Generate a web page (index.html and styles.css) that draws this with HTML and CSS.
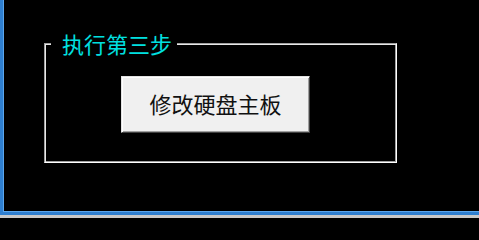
FILE: index.html
```html
<!DOCTYPE html>
<html lang="zh">
<head>
<meta charset="utf-8">
<link rel="stylesheet" href="styles.css">
</head>
<body>
<div class="window">
  <div class="panel">
    <fieldset class="group">
      <legend class="group-title">执行第三步</legend>
      <button class="btn" type="button">修改硬盘主板</button>
    </fieldset>
  </div>
  <div class="status"></div>
</div>
</body>
</html>
```

FILE: styles.css
```css
html, body {
  margin: 0;
  padding: 0;
  background: #000;
  overflow: hidden;
}
.window {
  width: 479px;
  height: 218px;
  display: flex;
  flex-direction: column;
  overflow: hidden;
}
.panel {
  flex: 0 0 auto;
  box-sizing: border-box;
  height: 215px;
  background: #000;
  border-left: 3px solid #2f7fd0;
  border-bottom: 3px solid #2f7fd0;
  box-shadow: inset 1px -1px 0 #5aa6ee;
  padding: 32px 0 0 41px;
}
.status {
  flex: 1 1 auto;
  background: #c9c9c9;
}
.group {
  box-sizing: border-box;
  width: 353px;
  margin: 0;
  padding: 0 0 29px 0;
  min-width: 0;
  border-width: 1px;
  border-style: solid;
  border-color: #a0a0a0 #ffffff #ffffff #a0a0a0;
  box-shadow: inset 1px 1px 0 #e8e8e8, inset -1px -1px 0 #a0a0a0;
}
.group-title {
  margin-left: 6px;
  padding: 0 5px 0 11px;
  background: #000;
  color: #00e0e0;
  font-family: "Noto Sans CJK SC", "Noto Sans", sans-serif;
  font-size: 22px;
  line-height: 22px;
  height: 22px;
}
.btn {
  display: flex;
  align-items: center;
  justify-content: center;
  box-sizing: border-box;
  width: 189px;
  height: 57px;
  margin: 22px 0 0 76px;
  padding: 0 0 4px 0;
  background: #f0f0f0;
  color: #111;
  font-family: "Noto Sans CJK SC", "Noto Sans", sans-serif;
  font-size: 22px;
  line-height: 22px;
  border-width: 1px;
  border-style: solid;
  border-color: #e3e3e3 #404040 #404040 #e3e3e3;
  box-shadow: inset 1px 1px 0 #ffffff, inset -1px -1px 0 #a0a0a0;
  border-radius: 0;
}
```
